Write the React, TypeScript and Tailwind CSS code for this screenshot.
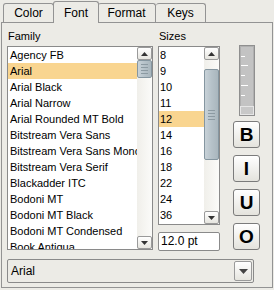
import React from "react";

const families = [
  "Agency FB",
  "Arial",
  "Arial Black",
  "Arial Narrow",
  "Arial Rounded MT Bold",
  "Bitstream Vera Sans",
  "Bitstream Vera Sans Mono",
  "Bitstream Vera Serif",
  "Blackadder ITC",
  "Bodoni MT",
  "Bodoni MT Black",
  "Bodoni MT Condensed",
  "Book Antiqua",
];

const sizes = ["8", "9", "10", "11", "12", "14", "16", "18", "22", "24", "36"];

const font = { fontFamily: "'Liberation Sans', Arial, sans-serif" };

function ArrowBtn({ dir }: { dir: "up" | "down" }) {
  return (
    <div className="w-[15px] h-[13px] shrink-0 border border-[#9a9a9a] rounded-[2px] bg-gradient-to-b from-white to-[#e6e5df] flex items-center justify-center">
      <svg width="7" height="4" viewBox="0 0 7 4">
        {dir === "up" ? (
          <path d="M0 4 L3.5 0 L7 4 Z" fill="#333" />
        ) : (
          <path d="M0 0 L3.5 4 L7 0 Z" fill="#333" />
        )}
      </svg>
    </div>
  );
}

function Thumb({ h }: { h: number }) {
  return (
    <div
      className="w-[15px] shrink-0 border border-[#8596a0] rounded-[2px] bg-gradient-to-r from-[#c8d2d8] via-[#b6c2c9] to-[#a9b6bd] flex flex-col items-center justify-center gap-[2px]"
      style={{ height: h }}
    >
      {[0, 1, 2, 3].map((i) => (
        <div key={i} className="w-[7px] h-px bg-[#8c9aa2]" />
      ))}
    </div>
  );
}

function ScrollBar({ before, thumb }: { before: number; thumb: number }) {
  return (
    <div className="w-[15px] flex flex-col bg-gradient-to-r from-[#f0efea] to-[#fbfbf9]">
      <ArrowBtn dir="up" />
      <div style={{ height: before }} />
      <Thumb h={thumb} />
      <div className="flex-1" />
      <ArrowBtn dir="down" />
    </div>
  );
}

function StyleBtn({ label }: { label: string }) {
  return (
    <div className="w-[27px] h-[27px] rounded-[3px] border border-[#7b7b7b] bg-gradient-to-b from-white to-[#e4e3dd] flex items-center justify-center text-[19px] font-bold text-black leading-none">
      {label}
    </div>
  );
}

export default function App() {
  return (
    <div
      className="w-[274px] h-[290px] bg-[#ecebe6] text-black overflow-hidden"
      style={font}
    >
      {/* Tabs */}
      <div className="h-[22px] flex items-end pl-[3px] text-[12px]">
        <div className="w-[51px] h-[19px] border border-b-0 border-[#939393] rounded-t-[3px] bg-[#ecebe6] flex items-center justify-center">
          Color
        </div>
        <div className="w-[46px] h-[22px] -mx-px -mb-px relative z-10 border border-b-0 border-[#939393] rounded-t-[3px] bg-[#ecebe6] flex items-center justify-center">
          Font
        </div>
        <div className="w-[58px] h-[19px] border border-b-0 border-l-0 border-[#939393] rounded-t-[3px] bg-[#ecebe6] flex items-center justify-center">
          Format
        </div>
        <div className="w-[50px] h-[19px] border border-b-0 border-l-0 border-[#939393] rounded-t-[3px] bg-[#ecebe6] flex items-center justify-center">
          Keys
        </div>
      </div>

      {/* Panel */}
      <div className="ml-px w-[272px] h-[266px] border border-[#939393] pt-[1px] px-[5px] text-[11px]">
        <div className="flex">
          {/* Family */}
          <div className="w-[146px] flex flex-col">
            <div className="h-[22px] pl-[1px] pt-[4px]">Family</div>
            <div className="h-[204px] border border-[#8a8a8a] bg-white flex">
              <div className="flex-1 overflow-hidden">
                {families.map((f, i) => (
                  <div
                    key={f}
                    className={`h-[16px] pl-[2px] leading-[16px] whitespace-nowrap ${i === 1 ? "bg-[#f9d590]" : ""}`}
                  >
                    {f}
                  </div>
                ))}
              </div>
              <ScrollBar before={0} thumb={18} />
            </div>
          </div>

          {/* Sizes */}
          <div className="ml-[5px] w-[62px] flex flex-col">
            <div className="h-[22px] pl-[1px] pt-[4px]">Sizes</div>
            <div className="h-[179px] border border-[#8a8a8a] bg-white flex">
              <div className="flex-1 overflow-hidden">
                {sizes.map((s) => (
                  <div
                    key={s}
                    className={`h-[16px] pl-[1px] leading-[16px] ${s === "12" ? "bg-[#f9d590]" : ""}`}
                  >
                    {s}
                  </div>
                ))}
              </div>
              <ScrollBar before={9} thumb={91} />
            </div>
            <div className="mt-[7px] h-[19px] border border-[#8a8a8a] rounded-[2px] bg-white pl-[2px] leading-[17px] text-[12px]">
              12.0 pt
            </div>
          </div>

          {/* Style controls */}
          <div className="ml-[13px] w-[27px] flex flex-col items-center pt-[21px]">
            <svg width="16" height="71" viewBox="0 0 16 71">
              <rect x="0.5" y="0.5" width="15" height="70" fill="#c3c3c3" stroke="#8f8f8f" />
              <rect x="1.5" y="1.5" width="13" height="68" fill="none" stroke="#b0b0b0" />
              <line x1="2" y1="11.5" x2="6" y2="11.5" stroke="#fff" />
              <line x1="2" y1="20.5" x2="9" y2="20.5" stroke="#fff" />
              <line x1="2" y1="30.5" x2="6" y2="30.5" stroke="#fff" />
              <line x1="2" y1="40.5" x2="9" y2="40.5" stroke="#fff" />
              <line x1="2" y1="50.5" x2="6" y2="50.5" stroke="#fff" />
              <rect x="1.5" y="61.5" width="13" height="8" fill="#c8c8c8" stroke="#e6e6e6" />
            </svg>
            <div className="mt-[5px] flex flex-col gap-[7px]">
              <StyleBtn label="B" />
              <StyleBtn label="I" />
              <StyleBtn label="U" />
              <StyleBtn label="O" />
            </div>
          </div>
        </div>

        {/* Family combo */}
        <div className="mt-[8px] w-[247px] h-[24px] border border-[#8a8a8a] rounded-[2px] flex items-center justify-between pl-[3px] pr-[1px] text-[12px]">
          <span>Arial</span>
          <div className="w-[18px] h-[20px] border border-[#9a9a9a] rounded-[2px] bg-gradient-to-b from-white to-[#e6e5df] flex items-center justify-center">
            <svg width="9" height="5" viewBox="0 0 9 5">
              <path d="M0 0 L4.5 5 L9 0 Z" fill="#444" />
            </svg>
          </div>
        </div>
      </div>
    </div>
  );
}
